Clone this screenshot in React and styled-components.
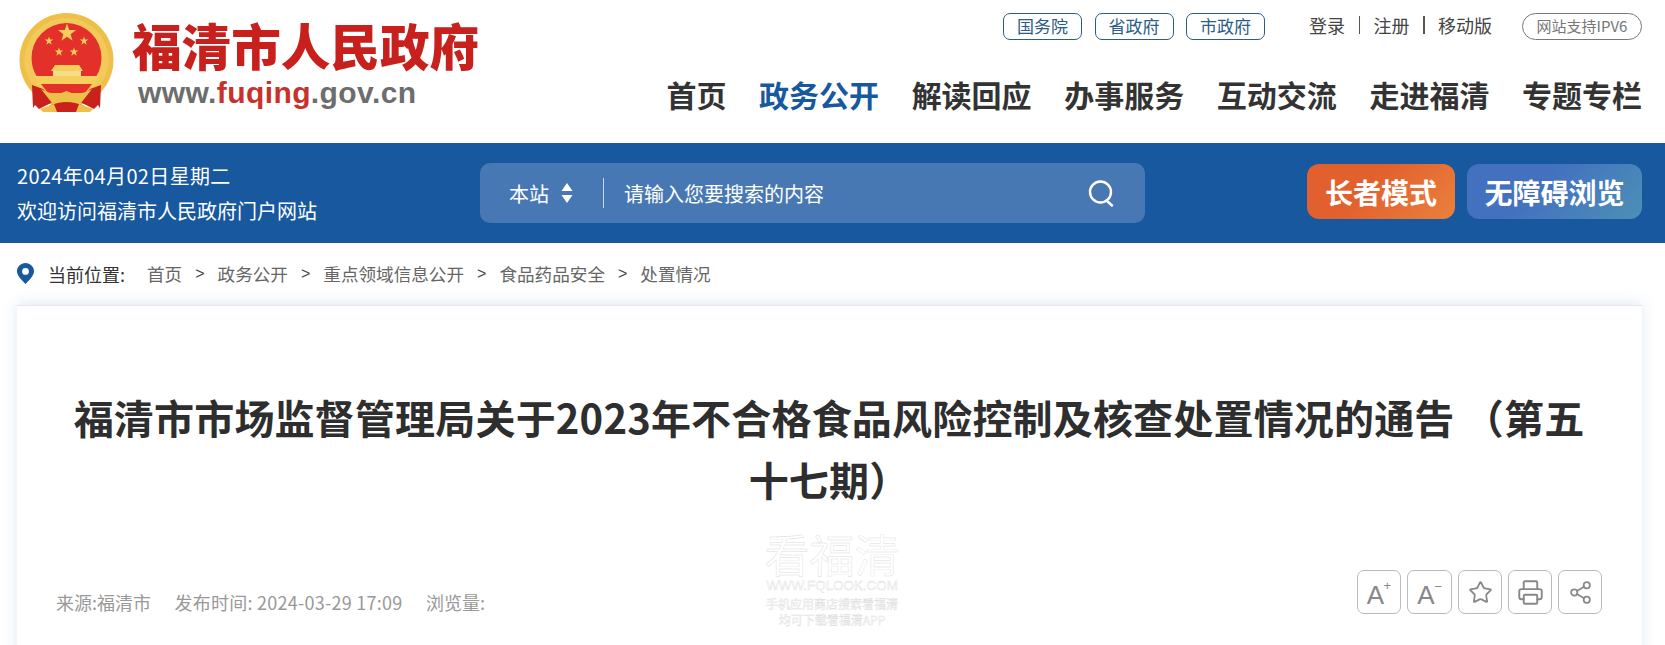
import React from 'react'
import styled, { createGlobalStyle } from 'styled-components'
import { Star, Printer, Share2 } from 'lucide-react'

const CJK = `"Noto Sans CJK SC", "Liberation Sans", sans-serif`

const starPoints = (cx, cy, r) => {
  const pts = []
  for (let i = 0; i < 10; i++) {
    const rad = i % 2 === 0 ? r : r * 0.4
    const a = -Math.PI / 2 + (i * Math.PI) / 5
    pts.push(`${(cx + rad * Math.cos(a)).toFixed(2)},${(cy + rad * Math.sin(a)).toFixed(2)}`)
  }
  return pts.join(' ')
}

function Emblem() {
  return (
    <svg width="95" height="99" viewBox="0 0 95 99">
      <circle cx="47.5" cy="47" r="47" fill="#eec04a" />
      <circle cx="47.5" cy="47" r="42" fill="#f3c95a" />
      <circle cx="47.5" cy="45" r="35" fill="#e3302a" />
      <polygon points={starPoints(48, 20, 9.5)} fill="#f5cf5c" />
      <polygon points={starPoints(30, 28, 4.5)} fill="#f5cf5c" />
      <polygon points={starPoints(65, 28, 4.5)} fill="#f5cf5c" />
      <polygon points={starPoints(40, 39, 4.5)} fill="#f5cf5c" />
      <polygon points={starPoints(55, 39, 4.5)} fill="#f5cf5c" />
      <path d="M36 52 H60 L64 58 H32 Z" fill="#f5cf5c" />
      <rect x="34" y="58" width="28" height="5" fill="#f7dc8b" />
      <path d="M16 63 H79 L76 71 H19 Z" fill="#f5cf5c" />
      <path d="M22 71 H73 L66 80 H29 Z" fill="#e3302a" />
      <path d="M13 72 L24 76 L36 88 L20 96 L16 92 L14 95 Z" fill="#c9211c" />
      <path d="M82 72 L71 76 L59 88 L75 96 L79 92 L81 95 Z" fill="#c9211c" />
      <path d="M22 76 Q36 84 47.5 78 Q59 84 73 76 L62 90 Q54 86 47.5 92 Q41 86 33 90 Z" fill="#eec04a" />
      <path d="M30 93 Q47.5 85 65 93 L60 99 H35 Z" fill="#c9211c" />
      <path d="M21 96 L35 91 L38 99 H24 Z" fill="#eec04a" />
      <path d="M74 96 L60 91 L57 99 H71 Z" fill="#eec04a" />
    </svg>
  )
}

function SearchIcon() {
  return (
    <svg width="28" height="28" viewBox="0 0 28 28" fill="none" stroke="#fff" strokeWidth="2.4" strokeLinecap="round">
      <circle cx="13.5" cy="13" r="10.5" />
      <line x1="20" y1="22" x2="25" y2="26.5" />
    </svg>
  )
}

function SortArrows() {
  return (
    <svg width="12" height="20" viewBox="0 0 12 20" fill="#fff">
      <path d="M6 0 L11.5 8 H0.5 Z" />
      <path d="M6 20 L11.5 12 H0.5 Z" />
    </svg>
  )
}

function Pin() {
  return (
    <svg width="17" height="21" viewBox="0 0 17 21">
      <path
        fillRule="evenodd"
        d="M8.5 0 C13.2 0 17 3.7 17 8.3 C17 13 11.5 18 8.5 21 C5.5 18 0 13 0 8.3 C0 3.7 3.8 0 8.5 0 Z M8.5 5 A3.4 3.4 0 1 0 8.5 11.8 A3.4 3.4 0 1 0 8.5 5 Z"
        fill="#17589e"
      />
    </svg>
  )
}

const crumbs = ['首页', '政务公开', '重点领域信息公开', '食品药品安全', '处置情况']
const navItems = ['首页', '政务公开', '解读回应', '办事服务', '互动交流', '走进福清', '专题专栏']

export default function App() {
  return (
    <Page>
      <GlobalStyle />
      <Header>
        <Logo>
          <Emblem />
          <LogoText>
            <LogoTitle>福清市人民政府</LogoTitle>
            <LogoUrl>
              www.<b>fuqing</b>.gov.cn
            </LogoUrl>
          </LogoText>
        </Logo>
        <HeaderRight>
          <TopLinks>
            <GovLinks>
              <GovLink>国务院</GovLink>
              <GovLink>省政府</GovLink>
              <GovLink>市政府</GovLink>
            </GovLinks>
            <UserLinks>
              <span>登录</span>
              <UserSep />
              <span>注册</span>
              <UserSep />
              <span>移动版</span>
            </UserLinks>
            <Ipv6>网站支持IPV6</Ipv6>
          </TopLinks>
          <Nav>
            {navItems.map((item) => (
              <NavItem key={item} $active={item === '政务公开'}>{item}</NavItem>
            ))}
          </Nav>
        </HeaderRight>
      </Header>

      <BlueBar>
        <Welcome>
          <DateLine>2024年04月02日星期二</DateLine>
          <div>欢迎访问福清市人民政府门户网站</div>
        </Welcome>
        <SearchBox>
          <Scope>
            本站
            <SortArrows />
          </Scope>
          <SearchDivider />
          <Placeholder>请输入您要搜索的内容</Placeholder>
          <SearchIcon />
        </SearchBox>
        <ModeButtons>
          <ModeButton $from="#e2602e" $to="#ea813c" $width={148}>长者模式</ModeButton>
          <ModeButton $from="#4371bf" $to="#4c90b6" $width={175}>无障碍浏览</ModeButton>
        </ModeButtons>
      </BlueBar>

      <Breadcrumb>
        <Pin />
        <CrumbLabel>当前位置:</CrumbLabel>
        {crumbs.map((c, i) => (
          <React.Fragment key={c}>
            {i > 0 && <CrumbSep>&gt;</CrumbSep>}
            <Crumb>{c}</Crumb>
          </React.Fragment>
        ))}
      </Breadcrumb>

      <Card>
        <Title>福清市市场监督管理局关于2023年不合格食品风险控制及核查处置情况的通告 （第五十七期）</Title>
        <MetaRow>
          <Meta>
            <span>来源:福清市</span>
            <MetaTime>发布时间: 2024-03-29 17:09</MetaTime>
            <span>浏览量:</span>
          </Meta>
          <Tools>
            <ToolButton $width={44}>
              <FontLetter>A</FontLetter>
              <FontMark $top={8}>+</FontMark>
            </ToolButton>
            <ToolButton $width={45}>
              <FontLetter>A</FontLetter>
              <FontMark $top={9}>−</FontMark>
            </ToolButton>
            <ToolButton $width={44}>
              <Star size={25} strokeWidth={1.7} />
            </ToolButton>
            <ToolButton $width={44}>
              <Printer size={27} strokeWidth={1.7} />
            </ToolButton>
            <ToolButton $width={44}>
              <Share2 size={25} strokeWidth={1.7} />
            </ToolButton>
          </Tools>
        </MetaRow>
        <Watermark>
          <WatermarkBig>看福清</WatermarkBig>
          <WatermarkUrl>WWW.FQLOOK.COM</WatermarkUrl>
          <WatermarkSmall>手机应用商店搜索看福清</WatermarkSmall>
          <WatermarkSmall>均可下载看福清APP</WatermarkSmall>
        </Watermark>
      </Card>
    </Page>
  )
}

const GlobalStyle = createGlobalStyle`
  html, body {
    margin: 0;
    padding: 0;
    background: #fff;
    overflow: hidden;
    font-family: ${CJK};
  }
`
const Page = styled.div`
  width: 1665px;
  height: 645px;
  overflow: hidden;
  background: #fff;
`
const Header = styled.header`
  height: 143px;
  box-sizing: border-box;
  padding: 13px 23px 0 19px;
  display: flex;
  justify-content: space-between;
`
const Logo = styled.div`
  display: flex;
  align-items: flex-start;
  gap: 18px;
`
const LogoText = styled.div`
  display: flex;
  flex-direction: column;
`
const LogoTitle = styled.div`
  font-family: ${CJK};
  font-weight: 900;
  font-size: 49.6px;
  line-height: 58px;
  margin-top: 2px;
  color: #c8201c;
  white-space: nowrap;
`
const LogoUrl = styled.div`
  font-family: "Liberation Sans", sans-serif;
  font-weight: 700;
  font-size: 30px;
  line-height: 34px;
  letter-spacing: 0.4px;
  margin: 3px 0 0 6px;
  color: #6d6d6d;
  b {
    color: #c8322c;
  }
`
const HeaderRight = styled.div`
  display: flex;
  flex-direction: column;
  align-items: flex-end;
`
const TopLinks = styled.div`
  display: flex;
  align-items: center;
  height: 27px;
`
const GovLinks = styled.div`
  display: flex;
  gap: 12.5px;
  margin-right: 44px;
`
const GovLink = styled.a`
  width: 79px;
  height: 27px;
  box-sizing: border-box;
  padding-bottom: 2px;
  display: flex;
  align-items: center;
  justify-content: center;
  border: 1px solid #2c5d86;
  border-radius: 7px;
  font-size: 17px;
  color: #2c5d86;
`
const UserLinks = styled.div`
  display: flex;
  align-items: center;
  gap: 13.5px;
  font-size: 18px;
  color: #444;
  margin: 0 30px 3px 0;
`
const UserSep = styled.i`
  width: 1.5px;
  height: 18px;
  background: #555;
`
const Ipv6 = styled.div`
  width: 120px;
  height: 27px;
  box-sizing: border-box;
  padding-bottom: 2px;
  display: flex;
  align-items: center;
  justify-content: center;
  border: 1px solid #777;
  border-radius: 14px;
  font-size: 15px;
  color: #777;
  white-space: nowrap;
`
const Nav = styled.nav`
  display: flex;
  gap: 32.6px;
  margin-top: 34px;
`
const NavItem = styled.a`
  font-size: 30px;
  font-weight: 700;
  line-height: 40px;
  color: ${(p) => (p.$active ? '#17589e' : '#333')};
`
const BlueBar = styled.div`
  height: 100px;
  box-sizing: border-box;
  background: #17589e;
  padding: 0 23px 0 17px;
  display: flex;
  align-items: center;
  color: #fff;
`
const Welcome = styled.div`
  width: 463px;
  font-size: 20px;
  line-height: 35px;
  white-space: nowrap;
`
const DateLine = styled.div`
  letter-spacing: 0.35px;
`
const SearchBox = styled.div`
  width: 665px;
  height: 60px;
  box-sizing: border-box;
  background: #4878b3;
  border-radius: 10px;
  padding: 0 30px 0 29px;
  display: flex;
  align-items: center;
`
const Scope = styled.div`
  display: flex;
  align-items: center;
  gap: 12px;
  font-size: 20px;
`
const SearchDivider = styled.i`
  width: 1px;
  height: 30px;
  background: #c7d6e8;
  margin: 0 20px 0 30px;
`
const Placeholder = styled.div`
  flex: 1;
  font-size: 20px;
`
const ModeButtons = styled.div`
  margin: 0 0 3px auto;
  display: flex;
  gap: 12px;
`
const ModeButton = styled.button`
  width: ${(p) => p.$width}px;
  height: 55px;
  border: none;
  padding: 0;
  border-radius: 12px;
  background: linear-gradient(135deg, ${(p) => p.$from} 40%, ${(p) => p.$to});
  color: #fff;
  font-family: ${CJK};
  font-weight: 700;
  font-size: 28px;
  white-space: nowrap;
`
const Breadcrumb = styled.div`
  height: 62px;
  box-sizing: border-box;
  padding: 0 0 1px 17px;
  display: flex;
  align-items: center;
  font-size: 17.6px;
  color: #666;
`
const CrumbLabel = styled.span`
  color: #333;
  font-size: 18px;
  margin-left: 14px;
  margin-right: 22px;
`
const Crumb = styled.span`
  white-space: nowrap;
`
const CrumbSep = styled.span`
  margin: 0 13px;
  color: #444;
  font-family: "Liberation Sans", sans-serif;
  font-size: 16px;
`
const Card = styled.main`
  position: relative;
  margin: 0 23px 0 17px;
  height: 400px;
  box-sizing: border-box;
  padding: 80px 40px 0 39px;
  background: #fff;
  box-shadow: 0 -2px 14px rgba(30, 90, 150, 0.13);
  border-top: 1px solid #e3e9f0;
`
const Title = styled.h1`
  margin: 0;
  padding: 0 10px;
  font-size: 40px;
  font-weight: 700;
  letter-spacing: 0.18px;
  line-height: 62px;
  text-align: center;
  color: #2e2e2e;
`
const MetaRow = styled.div`
  margin-top: 60px;
  display: flex;
  align-items: flex-start;
  justify-content: space-between;
`
const Meta = styled.div`
  display: flex;
  gap: 23.5px;
  margin-top: 19px;
  font-size: 18px;
  color: #999;
`
const MetaTime = styled.span`
  letter-spacing: 0.25px;
`
const Tools = styled.div`
  display: flex;
  gap: 6px;
`
const ToolButton = styled.div`
  position: relative;
  width: ${(p) => p.$width}px;
  height: 44px;
  box-sizing: border-box;
  display: flex;
  align-items: center;
  justify-content: center;
  border: 1px solid #bbb;
  border-radius: 7px;
  color: #888;
`
const FontLetter = styled.span`
  font-family: "Liberation Sans", sans-serif;
  font-size: 26px;
  margin: 6px 7px 0 0;
`
const FontMark = styled.span`
  position: absolute;
  top: ${(p) => p.$top}px;
  right: 9px;
  font-family: "Liberation Sans", sans-serif;
  font-size: 13px;
  line-height: 13px;
`
const Watermark = styled.div`
  position: absolute;
  left: 745px;
  top: 223px;
  width: 140px;
  display: flex;
  flex-direction: column;
  align-items: center;
  color: transparent;
  -webkit-text-stroke: 0.4px #dcdcdc;
`
const WatermarkBig = styled.div`
  font-size: 45px;
  line-height: 49px;
  white-space: nowrap;
`
const WatermarkUrl = styled.div`
  font-family: "Liberation Sans", sans-serif;
  font-size: 13.4px;
  line-height: 15px;
  white-space: nowrap;
`
const WatermarkSmall = styled.div`
  font-size: 12px;
  line-height: 16px;
  white-space: nowrap;
  &:nth-child(3) {
    margin-top: 3px;
  }
`
